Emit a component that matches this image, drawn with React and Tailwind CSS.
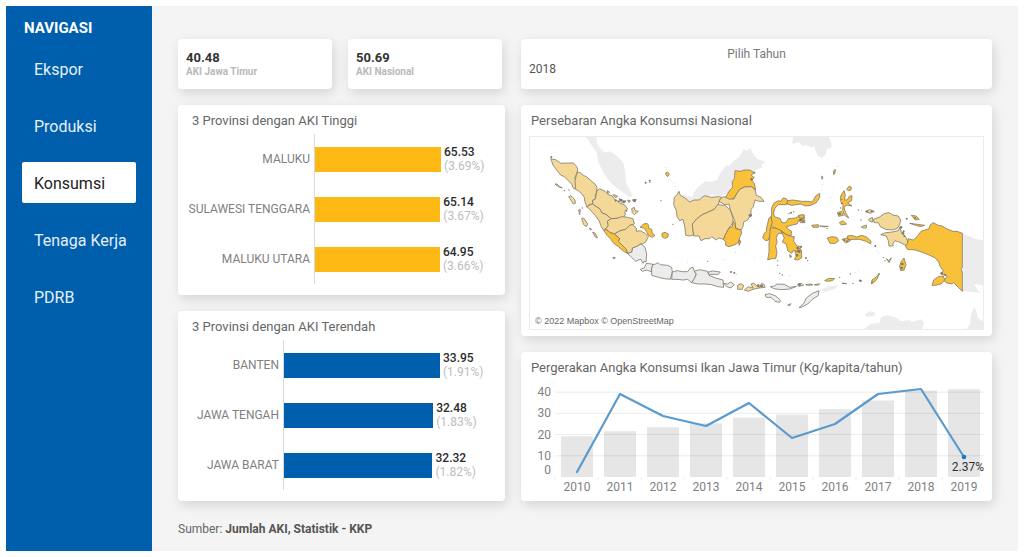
import React, { useState } from 'react';
import clsx from 'clsx';

const NAV_ITEMS = ['Ekspor', 'Produksi', 'Konsumsi', 'Tenaga Kerja', 'PDRB'];

const HIGHEST = [
  { name: 'MALUKU', value: 65.53, share: '3.69%' },
  { name: 'SULAWESI TENGGARA', value: 65.14, share: '3.67%' },
  { name: 'MALUKU UTARA', value: 64.95, share: '3.66%' },
];

const LOWEST = [
  { name: 'BANTEN', value: 33.95, share: '1.91%' },
  { name: 'JAWA TENGAH', value: 32.48, share: '1.83%' },
  { name: 'JAWA BARAT', value: 32.32, share: '1.82%' },
];

// total = kg per capita, y = height of the growth line in the plot
const TREND = [
  { year: 2010, total: 19.2, y: 92 },
  { year: 2011, total: 21.6, y: 14 },
  { year: 2012, total: 23.5, y: 36 },
  { year: 2013, total: 25.3, y: 46 },
  { year: 2014, total: 28, y: 23 },
  { year: 2015, total: 29.4, y: 58 },
  { year: 2016, total: 32, y: 44 },
  { year: 2017, total: 36.1, y: 14 },
  { year: 2018, total: 40.8, y: 9 },
  { year: 2019, total: 41.4, y: 77 },
];

// neighbouring countries, no outline
const NEIGHBOURS = [
  'M181 17L192 32 207 54 216 66 219 90 228 112 240 134 256 155 275 172 298 188 314 200 322 196 312 172 303 155 300 120 296 98 285 84 268 70 252 62 240 66 228 56 218 42 212 17Z',
  'M468 190L502 200 506 186 520 168 540 152 558 154 576 148 586 128 604 104 614 106 626 90 640 82 656 56 666 60 676 52 682 66 696 84 722 94 708 104 712 112 696 116 690 122 630 120 624 152 610 186 590 196 560 194 538 196 520 212 490 214Z',
  'M804 17L802 40 820 34 834 46 846 42 858 52 868 44 871 58 878 74 890 82 900 74 906 56 920 50 918 34 910 17Z',
  'M886 478L908 468 940 463 930 474 898 484Z',
  'M1312 308L1336 318 1354 326 1375 329V466L1356 460 1348 462 1358 478 1366 486 1346 484 1312 482Z',
  'M1017 596L1036 580 1064 576 1068 560 1088 554 1116 562 1126 572 1154 568 1160 574 1188 566 1198 576 1192 596Z',
  'M1019 552L1032 542 1052 546 1048 556 1026 558Z',
  'M1325 596L1336 578 1338 552 1348 528 1354 540 1358 560 1368 568 1375 576V596Z',
];

const GREY_PROVINCES = [
  'M307 368L320 364 322 352 338 346 348 340 360 350 365 370 363 394 357 392 354 398 348 386 340 388 332 392 320 380Z',
  'M346 416L358 412 364 398 374 399 384 401 380 412 380 424 366 418 352 422Z',
  'M384 402L392 400 398 396 406 402 428 404 440 410 442 424 436 446 418 444 400 440 380 434 380 412Z',
  'M442 424L456 420 472 423 488 423 496 412 504 410 508 422 514 430 508 444 500 456 488 446 474 448 456 446 440 446Z',
  'M508 422L524 417 548 422 552 434 572 442 594 448 596 470 578 468 560 462 540 460 520 460 500 456 508 444 514 430Z',
  'M548 425L562 421 586 424 580 431 552 431Z',
  'M596 458L608 460 616 454 628 462 618 472 606 468Z',
  'M736 468L748 466 756 460 778 461 794 470 814 467 796 475 768 477 746 474Z',
  'M818 460L830 458 836 464 820 467ZM842 462L858 460 854 465ZM868 462L884 459 880 464Z',
  'M720 492L734 489 752 496 766 508 764 515 750 512 738 500 724 500Z',
  'M822 531L836 518 844 502 862 488 882 480 880 494 862 506 848 520 828 530Z',
  'M788 523L798 519 794 525Z',
];

const LIGHT_PROVINCES = [
  'M77 84L84 86 92 87 102 94 108 98 127 97 146 97 152 104 158 114 157 124 150 140 152 160 155 174 146 174 140 160 128 148 118 138 108 134 95 118 84 103 80 92Z',
  'M157 124L166 126 175 134 184 138 196 148 210 160 216 170 214 186 211 192 211 205 203 208 203 220 192 222 186 230 180 214 178 200 170 190 163 182 152 176 150 150 153 138Z',
  'M216 180L224 174 232 178 240 182 250 192 262 196 268 206 275 208 284 218 298 222 308 235 298 244 302 250 296 260 276 263 258 264 244 252 230 246 224 234 211 226 203 220 203 210 211 205Z',
  'M186 228L196 222 203 220 211 226 224 234 230 246 244 252 258 264 247 272 250 284 243 294 236 300 228 286 222 270 212 256 205 248 196 238Z',
  'M258 264L276 263 290 258 308 260 324 264 328 280 314 284 302 296 286 300 268 310 252 304 243 294 250 284 247 272Z',
  'M268 310L286 300 302 296 314 284 322 282 334 292 334 302 346 300 360 308 370 318 362 334 352 340 346 338 338 346 322 352 320 364 307 368 304 356 292 344 280 332 284 324 276 316Z',
  'M462 182L466 194 480 202 494 214 508 208 522 208 538 195 560 200 580 198 590 200 584 208 580 222 568 236 550 244 532 252 516 264 502 280 506 312 494 316 482 314 480 292 474 266 464 270 456 258 454 240 446 222 448 200 456 192Z',
  'M502 280L516 264 532 252 550 244 568 236 578 222 600 224 616 238 624 262 624 276 612 292 600 314 596 326 580 322 574 328 560 318 554 324 540 324 528 330 522 316 506 316Z',
  'M590 200L602 198 626 206 634 190 644 176 660 168 680 168 690 178 694 194 708 200 717 212 702 212 690 208 684 230 678 236 678 252 668 268 656 274 654 288 648 298 632 292 630 272 622 252 616 238 612 220 600 222 582 212Z',
  'M638 464L648 459 656 464 652 476 638 476Z',
  'M658 478L670 468 684 472 678 460 686 457 696 466 704 470 710 458 718 462 720 470 702 472 684 476 670 482Z',
  'M1045 266L1062 260 1080 248 1092 246 1106 254 1120 256 1127 268 1124 282 1116 294 1102 298 1082 296 1066 288 1060 276 1048 276Z',
  'M1067 312L1082 306 1102 304 1120 300 1124 290 1130 306 1140 316 1148 330 1149 346 1138 342 1122 334 1110 330 1104 338 1104 346 1092 346 1090 330 1084 316Z',
  'M1031 266L1042 260 1044 274 1034 272ZM1021 242L1034 237 1048 242 1036 248ZM1009 288L1024 283 1024 292 1012 292Z',
  'M131 198L138 195 150 208 151 218 145 220ZM170 264L176 262 188 280 184 288 176 282ZM90 160L96 160 104 168 112 172 100 168ZM194 292L200 296 196 298ZM203 304L211 308 217 322 210 318ZM161 238L166 236 164 252Z',
  'M308 208L316 210 312 216ZM322 208L334 206 330 214ZM320 234L328 230 330 240 340 242 328 252 322 246Z',
  'M264 380L271 381 266 385ZM246 180L254 184 248 190ZM264 192L278 196 272 202ZM282 204L296 210 290 216Z',
];

const DARK_PROVINCES = [
  'M236 298L243 296 256 306 268 310 284 324 280 332 292 344 304 356 307 368 296 362 280 348 266 338 258 326 246 314Z',
  'M345 290L356 280 366 278 371 284 370 292 380 296 382 308 390 314 382 320 370 314 364 302 356 292Z',
  'M411 308L420 305 430 310 428 320 418 323 411 318Z',
  'M422 127L428 124 433 131 428 138 423 133Z',
  'M630 120L648 122 656 118 674 118 688 126 678 134 688 140 680 148 688 158 692 178 680 168 660 168 644 176 634 190 628 202 614 206 602 200 612 182 622 170 622 152 628 144Z',
  'M624 272L630 278 632 294 648 298 650 308 644 320 642 334 630 342 612 348 602 344 602 334 596 326 600 314 612 292 622 288ZM642 328L648 332 642 344Z',
  'M786 210L804 208 830 212 850 212 862 214 872 196 884 188 884 200 874 216 858 224 840 226 828 220 800 224 786 220Z',
  'M738 264L740 250 740 232 746 218 760 210 768 212 774 202 784 204 788 212 784 222 760 222 750 232 746 246 748 258 766 264 770 276 782 276 790 264 812 262 826 254 838 254 836 262 822 268 816 280 798 284 784 288 790 296 800 302 798 316 784 312 770 302 750 292 740 288Z',
  'M732 262L738 258 742 276 736 292 740 304 730 328 722 330 713 322 718 308 724 302 726 286Z',
  'M736 292L750 292 770 300 778 308 760 308 754 320 756 336 752 346 756 366 752 384 740 384 728 388 732 364 732 340 734 316Z',
  'M768 302L784 312 800 318 808 318 806 332 816 346 830 348 818 362 804 360 800 368 788 360 784 340 772 334 778 322Z',
  'M810 362L818 362 820 352 829 358 830 382 818 388 808 386 814 376ZM794 372L800 376 796 382Z',
  'M820 254L836 252 838 262 824 262ZM822 268L838 264 840 276 826 276Z',
  'M860 284L880 282 880 290 864 290ZM884 286L910 287 898 289Z',
  'M907 322L921 318 935 320 941 330 931 338 915 338Z',
  'M967 316L980 314 994 319 1010 314 1026 320 1038 332 1037 340 1023 332 1004 326 984 326 970 328ZM951 326L966 322 976 330 962 337Z',
  'M947 196L957 180 961 194 958 208 966 208 974 196 981 195 980 210 968 216 981 226 966 223 957 230 962 246 971 262 959 254 953 240 954 222 947 212Z',
  'M965 176L973 166 979 170 978 178 970 180ZM937 246L949 242 955 254 941 257ZM943 276L953 270 965 280 949 283Z',
  'M926 120L931 116 930 128 926 132ZM890 136L894 140 891 146Z',
  'M1149 324L1165 328 1176 318 1188 302 1200 298 1212 294 1216 282 1225 276 1240 284 1252 286 1264 294 1284 302 1296 302 1312 308V410L1308 416 1312 424V482L1300 470 1286 456 1280 460 1263 456 1257 450 1267 436 1249 430 1255 420 1246 408 1241 394 1231 382 1210 372 1190 364 1170 358 1147 356 1141 346 1148 338Z',
  'M1221 464L1226 448 1240 438 1255 436 1259 448 1248 460 1232 464Z',
  'M1159 254L1173 256 1183 266 1171 268ZM1154 278L1178 281 1199 284 1186 288Z',
  'M1129 392L1137 382 1143 402 1137 418 1127 420 1124 406Z',
  'M1085 384L1090 390 1099 382 1092 396ZM1039 460L1041 448 1055 438 1063 428 1057 444 1048 454Z',
  'M899 450L911 443 929 444 922 450 908 452ZM951 457L965 459 953 459ZM1003 448L1010 450 1006 454Z',
];

// very small islands: x, y, radius
const ISLETS = [
  [79, 79, 3], [118, 180, 2], [132, 178, 2], [421, 110, 1], [362, 156, 3], [374, 150, 3], [375, 155, 2],
  [445, 157, 1], [451, 168, 1], [408, 210, 2], [444, 281, 2], [300, 212, 3], [304, 240, 3], [288, 208, 4],
  [272, 210, 3], [282, 212, 3], [328, 210, 4], [296, 214, 4], [172, 232, 2], [488, 394, 1], [548, 392, 2],
  [596, 387, 1], [632, 366, 1], [618, 424, 3], [628, 427, 3], [634, 431, 1], [676, 254, 5], [688, 126, 3],
  [680, 146, 4], [689, 382, 1], [792, 249, 2], [798, 246, 3], [806, 243, 2], [828, 268, 4], [834, 272, 3],
  [818, 352, 4], [822, 362, 5], [828, 348, 3], [816, 374, 4], [758, 390, 2], [758, 404, 2], [764, 428, 2],
  [772, 433, 2], [794, 435, 1], [843, 382, 3], [848, 390, 2], [854, 398, 1], [844, 290, 1], [906, 294, 2],
  [892, 162, 1], [891, 178, 1], [917, 200, 1], [937, 108, 1], [700, 465, 4], [710, 466, 4], [824, 462, 4],
  [860, 462, 3], [872, 462, 2], [944, 440, 2], [976, 430, 2], [990, 426, 1], [1000, 418, 1], [984, 458, 2],
  [1006, 450, 3], [1012, 358, 1], [1051, 346, 3], [1056, 360, 1], [1060, 366, 1], [1075, 380, 2],
  [1080, 390, 2], [1000, 238, 2], [1010, 240, 1], [1008, 268, 2], [1026, 243, 3], [1040, 242, 3],
  [1128, 290, 4], [1134, 308, 4], [1138, 316, 3], [1136, 302, 3], [1132, 400, 4], [1130, 412, 4],
  [1145, 264, 3], [1170, 262, 3], [1062, 430, 2], [1042, 454, 2], [958, 328, 3], [966, 332, 3], [944, 250, 4],
  [950, 218, 3], [950, 206, 2], [947, 232, 2], [1106, 350, 1], [1250, 428, 4], [1260, 432, 3],
];

function Card({ className, children }) {
  return (
    <section className={clsx('bg-white rounded shadow-[2px_4px_12px_rgba(0,0,0,0.13)]', className)}>
      {children}
    </section>
  );
}

function StatCard({ value, label }) {
  return (
    <Card className="flex-1 h-[50px] px-2 pt-3">
      <p className="text-[13px] leading-[14px] font-bold text-[#333]">{value}</p>
      <p className="text-[10px] leading-[14px] font-bold text-[#b9b9b9]">{label}</p>
    </Card>
  );
}

function BarCard({ title, rows, max, labelClass, barClass }) {
  return (
    <Card className="h-[190px] pt-1.5 pl-3.5">
      <h2 className="text-[13px] leading-5 text-[#666]">{title}</h2>
      <div className="mt-[3px] flex">
        <div className={clsx('shrink-0 text-xs text-[#7f7f7f]', labelClass)}>
          {rows.map((row) => (
            <p key={row.name} className="h-[50px] flex items-center justify-end whitespace-nowrap">{row.name}</p>
          ))}
        </div>
        <div className="flex-1 ml-1 border-l border-[#d9d9d9]">
          {rows.map((row) => (
            <div key={row.name} className="h-[50px] flex items-center">
              <div
                className={clsx('h-[25px] shrink-0', barClass)}
                style={{ width: `${(row.value / max) * 100}%` }}
              />
              <div className="ml-[3px] text-xs leading-[14px]">
                <p className="font-medium text-[#2b2b2b]">{row.value.toFixed(2)}</p>
                <p className="text-[#bdbdbd]">({row.share})</p>
              </div>
            </div>
          ))}
        </div>
      </div>
    </Card>
  );
}

function IndonesiaMap() {
  return (
    <div className="relative mx-2 border border-[#ebebeb]">
      <svg viewBox="15 19 1359 576" className="block w-full" role="img" aria-label="Peta Indonesia">
        <g fill="#ececec">
          {NEIGHBOURS.map((d) => <path key={d} d={d} />)}
        </g>
        <g stroke="#80796a" strokeWidth="2.4" strokeLinejoin="round">
          <g fill="#ececec">
            {GREY_PROVINCES.map((d) => <path key={d} d={d} />)}
          </g>
          <g fill="#f4d898">
            {LIGHT_PROVINCES.map((d) => <path key={d} d={d} />)}
          </g>
          <g fill="#f9c13a">
            {DARK_PROVINCES.map((d) => <path key={d} d={d} />)}
          </g>
        </g>
        <g fill="#80796a">
          {ISLETS.map(([x, y, r]) => <circle key={`${x}-${y}`} cx={x} cy={y} r={r} />)}
        </g>
      </svg>
      <p className="absolute left-[5px] bottom-0.5 text-[9px] leading-3 text-[#666] font-['Liberation_Sans',sans-serif]">
        © 2022 Mapbox © OpenStreetMap
      </p>
    </div>
  );
}

function TrendChart() {
  const base = 97;
  const unit = 2.12;
  const band = 43;
  const center = (i) => 34 + band * i + 22;

  return (
    <svg viewBox="0 0 471 120" className="block w-full" role="img" aria-label="Angka konsumsi ikan Jawa Timur">
      {TREND.map((item, i) => (
        <rect
          key={item.year}
          x={center(i) - 16}
          y={base - item.total * unit}
          width="32"
          height={item.total * unit}
          fill="#e6e6e6"
        />
      ))}
      {[10, 20, 30, 40].map((tick) => (
        <line key={tick} x1="34" x2="463" y1={base - tick * unit} y2={base - tick * unit} stroke="#000" strokeOpacity="0.08" />
      ))}
      {TREND.map((item, i) => (
        <line key={item.year} x1={34 + band * i} x2={34 + band * i} y1="97" y2="100" stroke="#eee" />
      ))}
      <g fontSize="12" fill="#7f7f7f">
        {[10, 20, 30, 40].map((tick) => (
          <text key={tick} x="30" y={base - tick * unit + 4} textAnchor="end">{tick}</text>
        ))}
        <text x="30" y="94" textAnchor="end">0</text>
        {TREND.map((item, i) => (
          <text key={item.year} x={center(i)} y="111" textAnchor="middle">{item.year}</text>
        ))}
      </g>
      <polyline
        points={TREND.map((item, i) => `${center(i)},${item.y}`).join(' ')}
        fill="none"
        stroke="#5a9acd"
        strokeWidth="2.2"
        strokeLinejoin="round"
        strokeLinecap="round"
      />
      <circle cx={center(9)} cy="77" r="2.3" fill="#1f77bd" />
      <text x="463" y="91" textAnchor="end" fontSize="12" fill="#333">2.37%</text>
    </svg>
  );
}

function App() {
  const [active, setActive] = useState('Konsumsi');
  const [year, setYear] = useState('2018');

  return (
    <div className="min-h-screen p-1.5 flex bg-white font-[Roboto,sans-serif]">
      {/* Sidebar */}
      <nav className="w-[146px] shrink-0 bg-[#005fad] px-4 pt-3">
        <h1 className="pl-0.5 text-[15px] leading-5 font-bold text-white">NAVIGASI</h1>
        <ul className="mt-2.5 space-y-4">
          {NAV_ITEMS.map((item) => (
            <li key={item}>
              <a
                href="#"
                onClick={() => setActive(item)}
                aria-current={item === active ? 'page' : undefined}
                className={clsx(
                  'block h-[41px] pl-3 text-base leading-[43px] rounded-xs',
                  item === active ? 'bg-white text-[#222]' : 'text-[#e6eff7]'
                )}
              >
                {item}
              </a>
            </li>
          ))}
        </ul>
      </nav>

      <main className="flex-1 min-w-0 bg-[#f4f4f4] px-[26px] pt-[33px]">
        <div className="grid grid-cols-[327fr_471fr] gap-4">
          <div className="flex flex-col gap-4">
            <div className="flex gap-4 pr-[3px]">
              <StatCard value="40.48" label="AKI Jawa Timur" />
              <StatCard value="50.69" label="AKI Nasional" />
            </div>
            <BarCard
              title="3 Provinsi dengan AKI Tinggi"
              rows={HIGHEST}
              max={98.8}
              labelClass="w-[118px]"
              barClass="bg-[#fdb813]"
            />
            <BarCard
              title="3 Provinsi dengan AKI Terendah"
              rows={LOWEST}
              max={48.1}
              labelClass="w-[87px]"
              barClass="bg-[#005fad]"
            />
          </div>

          <div className="flex flex-col gap-4">
            <Card className="h-[50px] px-2 pt-2">
              <label htmlFor="year" className="block text-center text-xs leading-[15px] text-[#777]">Pilih Tahun</label>
              <select
                id="year"
                value={year}
                onChange={(e) => setYear(e.target.value)}
                className="block w-full appearance-none bg-transparent text-xs leading-[14px] text-[#555]"
              >
                {TREND.map((item) => (
                  <option key={item.year} value={item.year}>{item.year}</option>
                ))}
              </select>
            </Card>
            <Card className="h-[231px] pt-1.5">
              <h2 className="pl-2.5 mb-[5px] text-[13px] leading-5 text-[#666]">Persebaran Angka Konsumsi Nasional</h2>
              <IndonesiaMap />
            </Card>
            <Card className="h-[149px] pt-1.5">
              <h2 className="pl-2.5 mb-0.5 text-[13px] leading-5 text-[#666]">
                Pergerakan Angka Konsumsi Ikan Jawa Timur (Kg/kapita/tahun)
              </h2>
              <TrendChart />
            </Card>
          </div>
        </div>

        <p className="mt-5 text-xs leading-4 text-[#666]">
          Sumber: <b className="text-[#555]">Jumlah AKI, Statistik - KKP</b>
        </p>
      </main>
    </div>
  );
}

export default App;
